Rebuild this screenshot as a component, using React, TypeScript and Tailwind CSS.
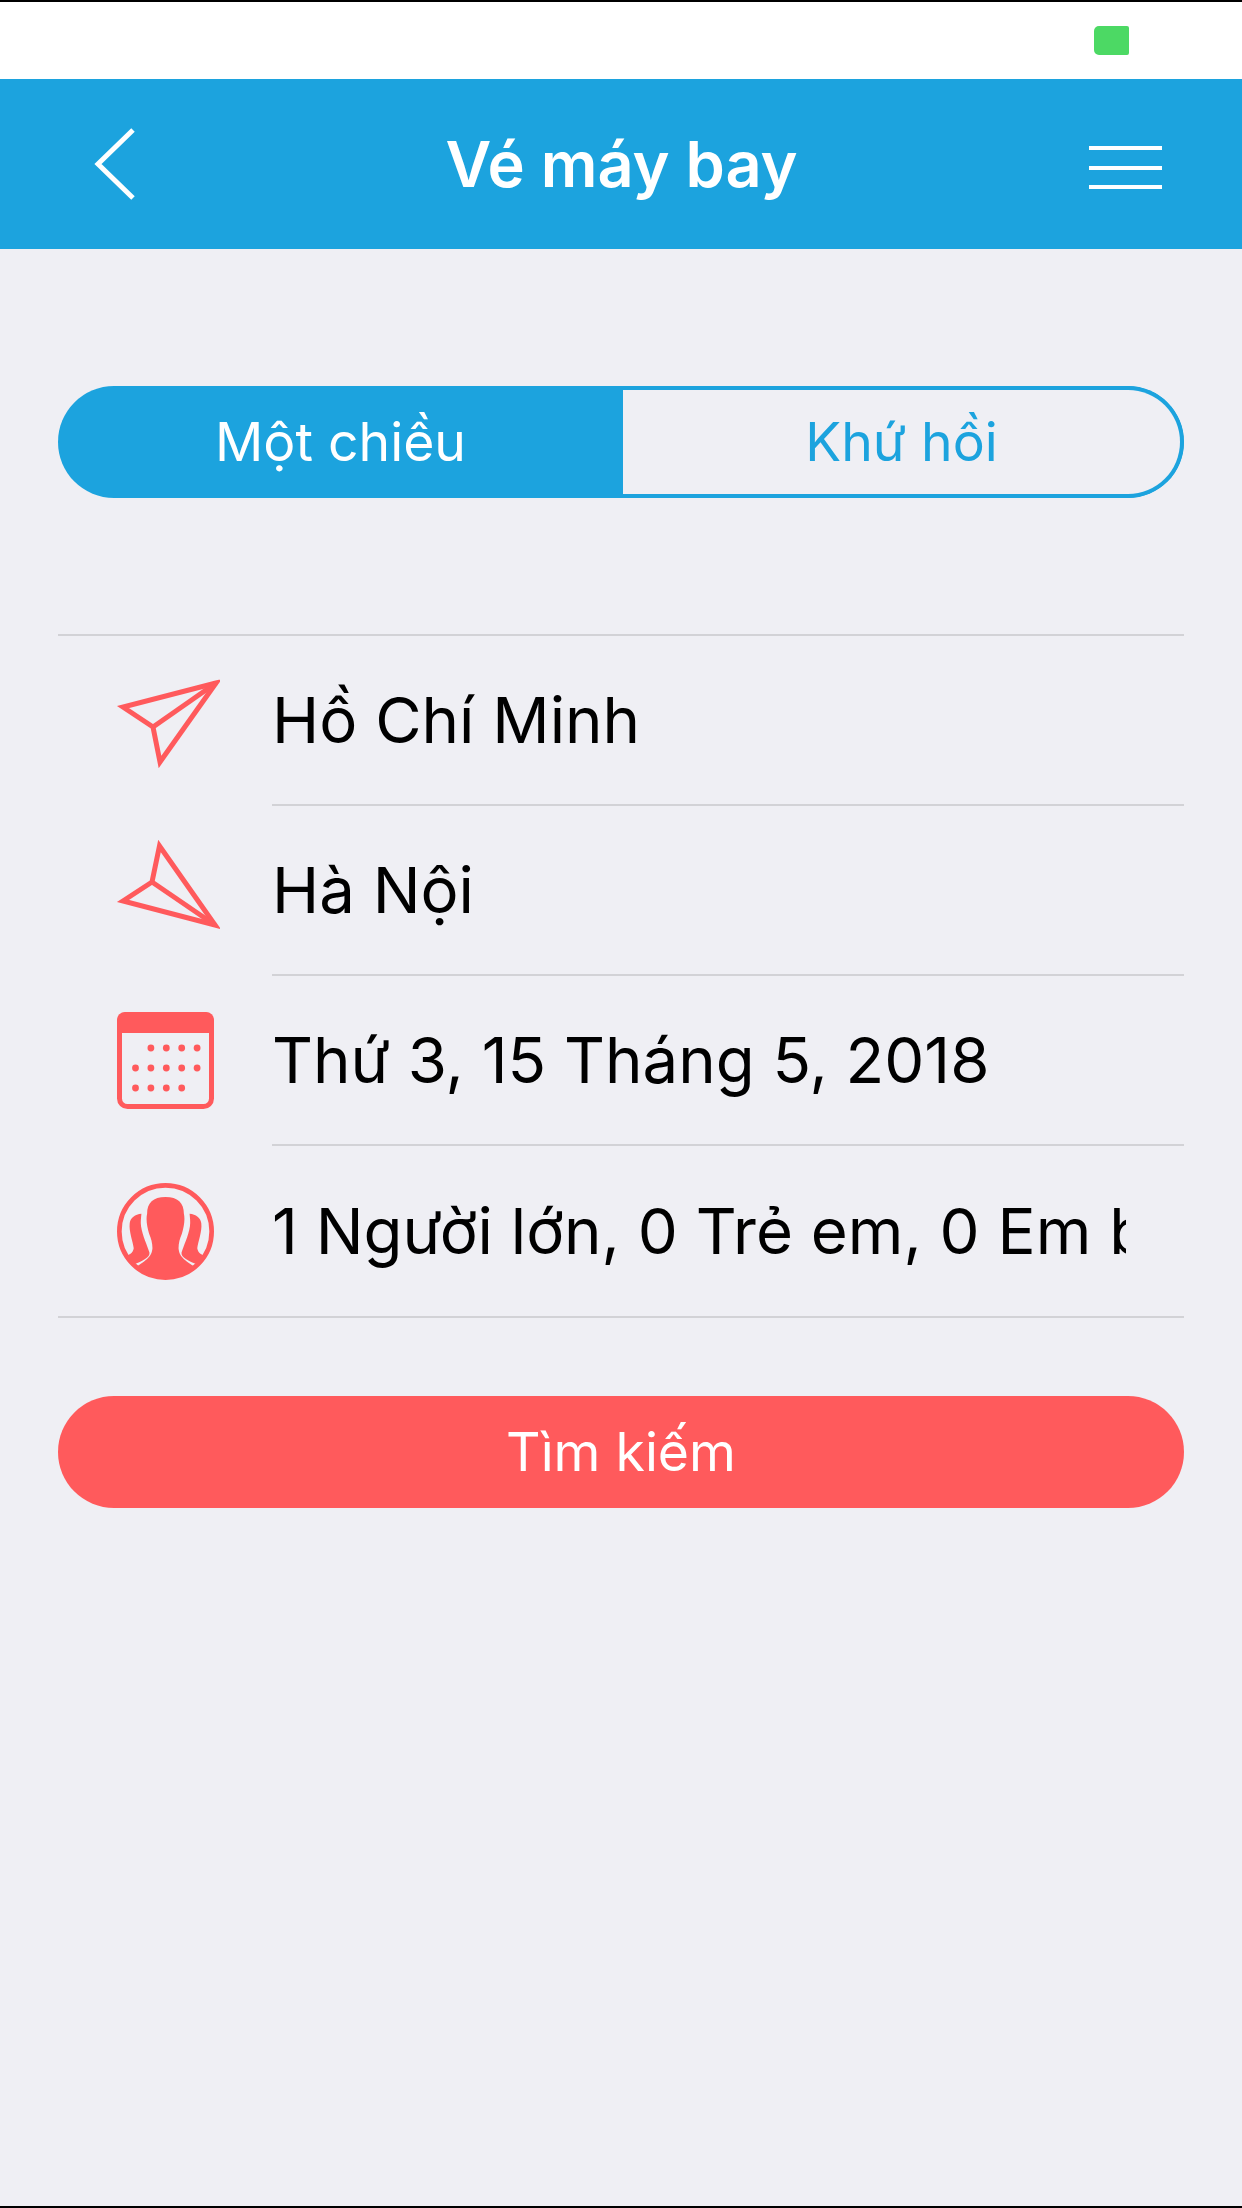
import React from 'react';

const font = { fontFamily: 'Inter, "Liberation Sans", sans-serif' };

const SendIcon = () => (
  <svg width="110" height="110" viewBox="0 0 110 110" fill="none" stroke="#ff5a5c" strokeWidth="5" strokeLinejoin="miter">
    <path d="M106 17 L13 41 L43 61 L50 96 Z" />
    <path d="M106 17 L43 61" />
  </svg>
);

const ArriveIcon = () => (
  <svg width="110" height="110" viewBox="0 0 110 110" fill="none" stroke="#ff5a5c" strokeWidth="5" strokeLinejoin="miter">
    <path d="M105 89 L13 65 L42 46 L49.5 10 Z" />
    <path d="M105 89 L42 46" />
  </svg>
);

const dots = [
  [1, 0], [2, 0], [3, 0], [4, 0],
  [0, 1], [1, 1], [2, 1], [3, 1], [4, 1],
  [0, 2], [1, 2], [2, 2], [3, 2],
];

const CalendarIcon = () => (
  <svg width="97" height="97" viewBox="0 0 97 97" className="-mt-[2px]">
    <rect x="2.5" y="2.5" width="92" height="92" rx="8" fill="none" stroke="#ff5a5c" strokeWidth="5" />
    <path d="M8 0 H89 A8 8 0 0 1 97 8 V21 H0 V8 A8 8 0 0 1 8 0 Z" fill="#ff5a5c" />
    {dots.map(([c, r]) => (
      <circle key={`${c}-${r}`} cx={18.5 + c * 15.4} cy={36 + r * 20} r="3.4" fill="#ff5a5c" />
    ))}
  </svg>
);

const sidePerson =
  'M93 112 C74 114 60 124 58 140 C55 165 68 195 70 215 C68 228 58 236 44 238 C52 250 60 258 70 264 C95 254 120 242 117 228 C110 205 97 180 92 150 C90 135 92 125 93 112 Z';

const PeopleIcon = () => (
  <svg width="97" height="97" viewBox="20 20 290 290">
    <circle cx="165" cy="165" r="138" fill="none" stroke="#ff5a5c" strokeWidth="14" />
    <path
      d="M165 62 C128 62 110 80 110 112 C106 130 110 150 116 172 C122 185 126 200 126 215 C124 235 118 245 78 270 C100 295 135 306 165 306 C195 306 230 295 252 270 C212 245 206 235 204 215 C204 200 208 185 214 172 C220 150 224 130 220 112 C220 80 202 62 165 62 Z"
      fill="#ff5a5c"
    />
    <path d={sidePerson} fill="#ff5a5c" />
    <path d={sidePerson} fill="#ff5a5c" transform="translate(330 0) scale(-1 1)" />
  </svg>
);

const Row = ({ icon, text, last }: { icon: React.ReactNode; text: string; last?: boolean }) => (
  <div className="flex h-[170px] items-center">
    <div className="flex w-[214px] shrink-0 items-center justify-center">{icon}</div>
    <div className={`flex h-full min-w-0 flex-1 items-center ${last ? '' : 'border-b-2 border-[#d2d2d6]'}`}>
      <div className="w-[854px] overflow-hidden whitespace-nowrap text-[63.5px] leading-[84px] text-black">{text}</div>
    </div>
  </div>
);

export default function App() {
  return (
    <div className="flex h-[2208px] w-[1242px] flex-col overflow-hidden border-t-2 border-b-2 border-black bg-[#efeff4]" style={font}>
      <div className="flex h-[77px] items-start justify-end bg-white pt-[24px] pr-[113px]">
        <div className="h-[29px] w-[35px] rounded-l-[5px] rounded-r-[2px] bg-[#4cd964]" />
      </div>

      <header className="flex h-[170px] items-center bg-[#1ca3de] pr-[80px] pl-[94px]">
        <div className="flex-1">
          <svg width="42" height="72" viewBox="0 0 42 72" fill="none" stroke="white" strokeWidth="5">
            <path d="M39 2 L4 36 L39 70" />
          </svg>
        </div>
        <h1 className="pr-[13px] text-[63px] leading-[84px] font-semibold text-white">Vé máy bay</h1>
        <div className="flex flex-1 justify-end">
          <div className="mt-[7px] flex w-[73px] flex-col gap-[15.5px]">
            <div className="h-[4px] bg-white" />
            <div className="h-[4px] bg-white" />
            <div className="h-[4px] bg-white" />
          </div>
        </div>
      </header>

      <main className="flex flex-col px-[58px] pt-[137px]">
        <div className="flex h-[112px] overflow-hidden rounded-full bg-[#1ca3de]">
          <div className="flex w-[565px] items-center justify-center text-[53.5px] text-white">Một chiều</div>
          <div className="flex flex-1 items-center justify-center rounded-r-full border-y-4 border-r-4 border-[#1ca3de] bg-[#efeff4] text-[53.5px] text-[#1ca3de]">
            Khứ hồi
          </div>
        </div>

        <div className="mt-[136px] border-y-2 border-[#d2d2d6]">
          <Row icon={<SendIcon />} text="Hồ Chí Minh" />
          <Row icon={<ArriveIcon />} text="Hà Nội" />
          <Row icon={<CalendarIcon />} text="Thứ 3, 15 Tháng 5, 2018" />
          <Row icon={<PeopleIcon />} text="1 Người lớn, 0 Trẻ em, 0 Em bé" last />
        </div>

        <button className="mt-[78px] h-[112px] rounded-full bg-[#ff5a5c] text-[53.5px] text-white">Tìm kiếm</button>
      </main>
    </div>
  );
}
